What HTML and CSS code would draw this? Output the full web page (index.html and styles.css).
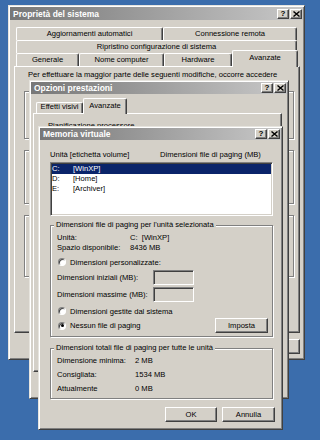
FILE: index.html
```html
<!DOCTYPE html>
<html lang="it">
<head>
  <meta charset="UTF-8" />
  <meta name="viewport" content="width=device-width, initial-scale=1.0"/>
  <title>Memoria virtuale</title>
  <link rel="stylesheet" href="styles.css">
</head>
<body>
  <div class="desktop">

    <!-- Proprietà del sistema (sullo sfondo) -->
    <div class="win win-sys">
      <div class="titlebar">
        <span>Proprietà del sistema</span>
        <div class="tbtns">
          <span class="tbtn">?</span>
          <span class="tbtn"><svg width="7" height="6" viewBox="0 0 7 6"><path d="M0.5 0.5L6.5 5.5M6.5 0.5L0.5 5.5" stroke="#000" stroke-width="1.4"/></svg></span>
        </div>
      </div>
      <div class="tabctl sys-tabs">
        <div class="tabrow">
          <div class="tab t-agg">Aggiornamenti automatici</div>
          <div class="tab t-conn">Connessione remota</div>
        </div>
        <div class="tabrow">
          <div class="tab t-rip">Ripristino configurazione di sistema</div>
        </div>
        <div class="tabrow">
          <div class="tab t-gen">Generale</div>
          <div class="tab t-nome">Nome computer</div>
          <div class="tab t-hw">Hardware</div>
          <div class="tab t-adv active">Avanzate</div>
        </div>
        <div class="panel sys-panel">
          <p class="note">Per effettuare la maggior parte delle seguenti modifiche, occorre accedere</p>
          <!-- gruppi coperti dalle altre finestre: se ne vedono solo i bordi -->
          <div class="group sys-group g-perf"></div>
          <div class="group sys-group g-prof"></div>
          <div class="group sys-group g-boot"></div>
        </div>
      </div>
      <!-- OK e Annulla restano nascosti sotto le altre finestre -->
      <div class="btnrow sys-btns">
        <button class="btn">Applica</button>
      </div>
    </div>

    <!-- Opzioni prestazioni -->
    <div class="win win-perf">
      <div class="titlebar">
        <span>Opzioni prestazioni</span>
        <div class="tbtns">
          <span class="tbtn">?</span>
          <span class="tbtn"><svg width="7" height="6" viewBox="0 0 7 6"><path d="M0.5 0.5L6.5 5.5M6.5 0.5L0.5 5.5" stroke="#000" stroke-width="1.4"/></svg></span>
        </div>
      </div>
      <div class="tabctl perf-tabs">
        <div class="tabrow">
          <div class="tab t-eff">Effetti visivi</div>
          <div class="tab t-adv2 active">Avanzate</div>
        </div>
        <div class="panel perf-panel">
          <fieldset class="group perf-group"><legend>Pianificazione processore</legend></fieldset>
        </div>
      </div>
    </div>

    <!-- Memoria virtuale -->
    <div class="win win-vm">
      <div class="titlebar">
        <span>Memoria virtuale</span>
        <div class="tbtns">
          <span class="tbtn">?</span>
          <span class="tbtn"><svg width="7" height="6" viewBox="0 0 7 6"><path d="M0.5 0.5L6.5 5.5M6.5 0.5L0.5 5.5" stroke="#000" stroke-width="1.4"/></svg></span>
        </div>
      </div>
      <div class="vm-body">
        <div class="cols">
          <span>Unità [etichetta volume]</span>
          <span>Dimensioni file di paging (MB)</span>
        </div>
        <div class="listbox">
          <div class="lrow sel"><span>C:</span><span>[WinXP]</span></div>
          <div class="lrow"><span>D:</span><span>[Home]</span></div>
          <div class="lrow"><span>E:</span><span>[Archiver]</span></div>
        </div>

        <fieldset class="group grp-sel">
          <legend>Dimensioni file di paging per l'unità selezionata</legend>
          <div class="kv"><span>Unità:</span><span class="pre">C:  [WinXP]</span></div>
          <div class="kv"><span>Spazio disponibile:</span><span>8436 MB</span></div>
          <label class="radio r-custom"><span class="dot"></span>Dimensioni personalizzate:</label>
          <div class="field"><span>Dimensioni iniziali (MB):</span><span class="textbox"></span></div>
          <div class="field f-max"><span>Dimensioni massime (MB):</span><span class="textbox"></span></div>
          <label class="radio r-sys"><span class="dot"></span>Dimensioni gestite dal sistema</label>
          <div class="setrow">
            <label class="radio"><span class="dot on"></span>Nessun file di paging</label>
            <button class="btn">Imposta</button>
          </div>
        </fieldset>

        <fieldset class="group grp-tot">
          <legend>Dimensioni totali file di paging per tutte le unità</legend>
          <div class="kv2"><span>Dimensione minima:</span><span>2 MB</span></div>
          <div class="kv2"><span>Consigliata:</span><span>1534 MB</span></div>
          <div class="kv2"><span>Attualmente</span><span>0 MB</span></div>
        </fieldset>

        <div class="btnrow vm-btns">
          <button class="btn b-ok">OK</button>
          <button class="btn">Annulla</button>
        </div>
      </div>
    </div>

  </div>
</body>
</html>
```

FILE: styles.css
```css
body {
  margin: 0;
  background: #3b6dac;
  font-family: "Liberation Sans", Arial, sans-serif;
  font-size: 7.6px;
  color: #000;
}
.desktop {
  position: relative;
  width: 320px;
  height: 440px;
  overflow: hidden;
}

/* finestre */
.win {
  position: absolute;
  box-sizing: border-box;
  display: flex;
  flex-direction: column;
  background: #d4d0c8;
  border: 1px solid;
  border-color: #e6e4de #404040 #404040 #e6e4de;
  box-shadow: inset 1px 1px #fff, inset -1px -1px #808080;
  padding: 1px;
}
.win-sys { left: 8px; top: 5px; width: 297px; height: 355px; }
.win-perf { left: 29px; top: 80px; width: 260px; height: 319px; }
.win-vm { left: 38px; top: 126px; width: 245px; height: 304px; }

.titlebar {
  flex: none;
  display: flex;
  align-items: center;
  justify-content: space-between;
  height: 12px;
  padding: 0 1px 0 3px;
  background: linear-gradient(to right, #777, #c8c8c8);
  color: #fff;
  font-weight: bold;
  font-size: 8.5px;
  white-space: nowrap;
}
.win-sys .titlebar { height: 13px; }
.tbtns { display: flex; gap: 1px; }
.tbtn {
  box-sizing: border-box;
  display: flex;
  align-items: center;
  justify-content: center;
  width: 12px;
  height: 10px;
  background: #d4d0c8;
  border: 1px solid;
  border-color: #fff #404040 #404040 #fff;
  box-shadow: inset -1px -1px #808080;
  color: #000;
  font-size: 8px;
  line-height: 8px;
}

/* schede */
.tabctl {
  flex: 1;
  display: flex;
  flex-direction: column;
}
.sys-tabs { margin: 7px 3px 0 4px; }
.perf-tabs { margin: 4px 5px 25px 2px; }
.tabrow {
  flex: none;
  display: flex;
  height: 13px;
  padding-left: 2px;
}
.tab {
  box-sizing: border-box;
  height: 13px;
  border: 1px solid #fff;
  border-bottom: 0;
  border-right-color: #404040;
  border-radius: 2px 2px 0 0;
  box-shadow: inset -1px 0 #808080;
  text-align: center;
  line-height: 11px;
  white-space: nowrap;
}
.tab.active {
  position: relative;
  z-index: 1;
  height: 17px;
  margin-top: -3px;
  background: #d4d0c8;
  line-height: 13px;
}
.t-agg { width: 147px; }
.t-conn { width: 134px; }
.t-rip { width: 281px; }
.t-gen { width: 63px; }
.t-nome { width: 85px; }
.t-hw { width: 68px; }
.t-adv { width: 66px; }

.perf-tabs .tabrow { height: 15px; padding-left: 3px; align-items: flex-end; }
.perf-tabs .tab { height: 11px; line-height: 8px; }
.perf-tabs .tab.active { height: 16px; margin: 0 0 -1px; line-height: 13px; }
.t-eff { width: 47px; }
.t-adv2 { width: 44px; }

.panel {
  flex: 1;
  border: 1px solid;
  border-color: #fff #404040 #404040 #fff;
  box-shadow: inset -1px -1px #808080;
}
.note {
  margin: 0;
  padding: 3px 0 0 13px;
  line-height: 10px;
  white-space: nowrap;
}

/* gruppi */
.group {
  margin: 0;
  padding: 0;
  min-width: 0;
  border: 1px solid #808080;
  box-shadow: inset 1px 1px #fff, 1px 1px #fff;
}
.group legend {
  padding: 0 2px;
  margin-left: -3px;
  line-height: 10px;
  background: #d4d0c8;
  white-space: nowrap;
}
.sys-group { margin: 11px 5px 0 9px; height: 46px; }
.g-prof { height: 52px; }
.g-boot { height: 60px; }
.perf-group { margin: 7px 10px 0 10px; height: 60px; padding-left: 4px; }

/* pulsanti */
.btnrow {
  flex: none;
  display: flex;
  justify-content: flex-end;
  gap: 5px;
}
.sys-btns { margin: 6px 3px 4px 0; }
.btn {
  box-sizing: border-box;
  width: 53px;
  height: 15px;
  padding: 0;
  font: inherit;
  color: #000;
  background: #d4d0c8;
  border: 1px solid;
  border-color: #fff #404040 #404040 #fff;
  box-shadow: inset -1px -1px #808080;
}

/* memoria virtuale */
.vm-body {
  flex: 1;
  display: flex;
  flex-direction: column;
  padding: 10px 8px 0 10px;
}
.cols {
  display: grid;
  grid-template-columns: 110px 1fr;
  line-height: 10px;
  white-space: nowrap;
}
.listbox {
  box-sizing: border-box;
  height: 54px;
  margin-top: 2px;
  padding: 1px;
  background: #fff;
  border: 1px solid;
  border-color: #808080 #fff #fff #808080;
  box-shadow: inset 1px 1px #404040, inset -1px -1px #d4d0c8;
}
.lrow {
  display: grid;
  grid-template-columns: 21px 1fr;
  height: 10px;
  line-height: 10px;
}
.lrow.sel { background: #0a246a; color: #fff; }

.grp-sel { margin-top: 4px; padding: 3px 4px 3px 6px; }
.grp-tot { margin-top: 6px; padding: 1px 4px 2px 6px; }
.kv {
  display: grid;
  grid-template-columns: 73px 1fr;
  line-height: 10px;
}
.kv2 {
  display: grid;
  grid-template-columns: 78px 1fr;
  line-height: 14px;
}
.pre { white-space: pre; }

.radio {
  display: flex;
  align-items: center;
  gap: 4px;
  height: 10px;
  white-space: nowrap;
}
.r-custom { margin-top: 4px; }
.r-sys { margin-top: 4px; }
.dot {
  box-sizing: border-box;
  display: flex;
  align-items: center;
  justify-content: center;
  width: 8px;
  height: 8px;
  margin-left: 1px;
  border-radius: 50%;
  background: #fff;
  border: 1px solid;
  border-color: #808080 #fff #fff #808080;
  box-shadow: inset 1px 1px #404040;
}
.dot.on::after {
  content: "";
  width: 3px;
  height: 3px;
  border-radius: 50%;
  background: #000;
}
.field {
  display: grid;
  grid-template-columns: 96px 41px;
  align-items: center;
  height: 15px;
  margin-top: 3px;
}
.f-max { margin-top: 2px; }
.textbox {
  box-sizing: border-box;
  height: 15px;
  background: #d4d0c8;
  border: 1px solid;
  border-color: #808080 #fff #fff #808080;
  box-shadow: inset 1px 1px #404040, inset -1px -1px #d4d0c8;
}
.setrow {
  display: flex;
  align-items: center;
  justify-content: space-between;
  margin-top: 2px;
}
.vm-btns { margin: 8px -2px 0 0; }
.b-ok { width: 52px; }
```
